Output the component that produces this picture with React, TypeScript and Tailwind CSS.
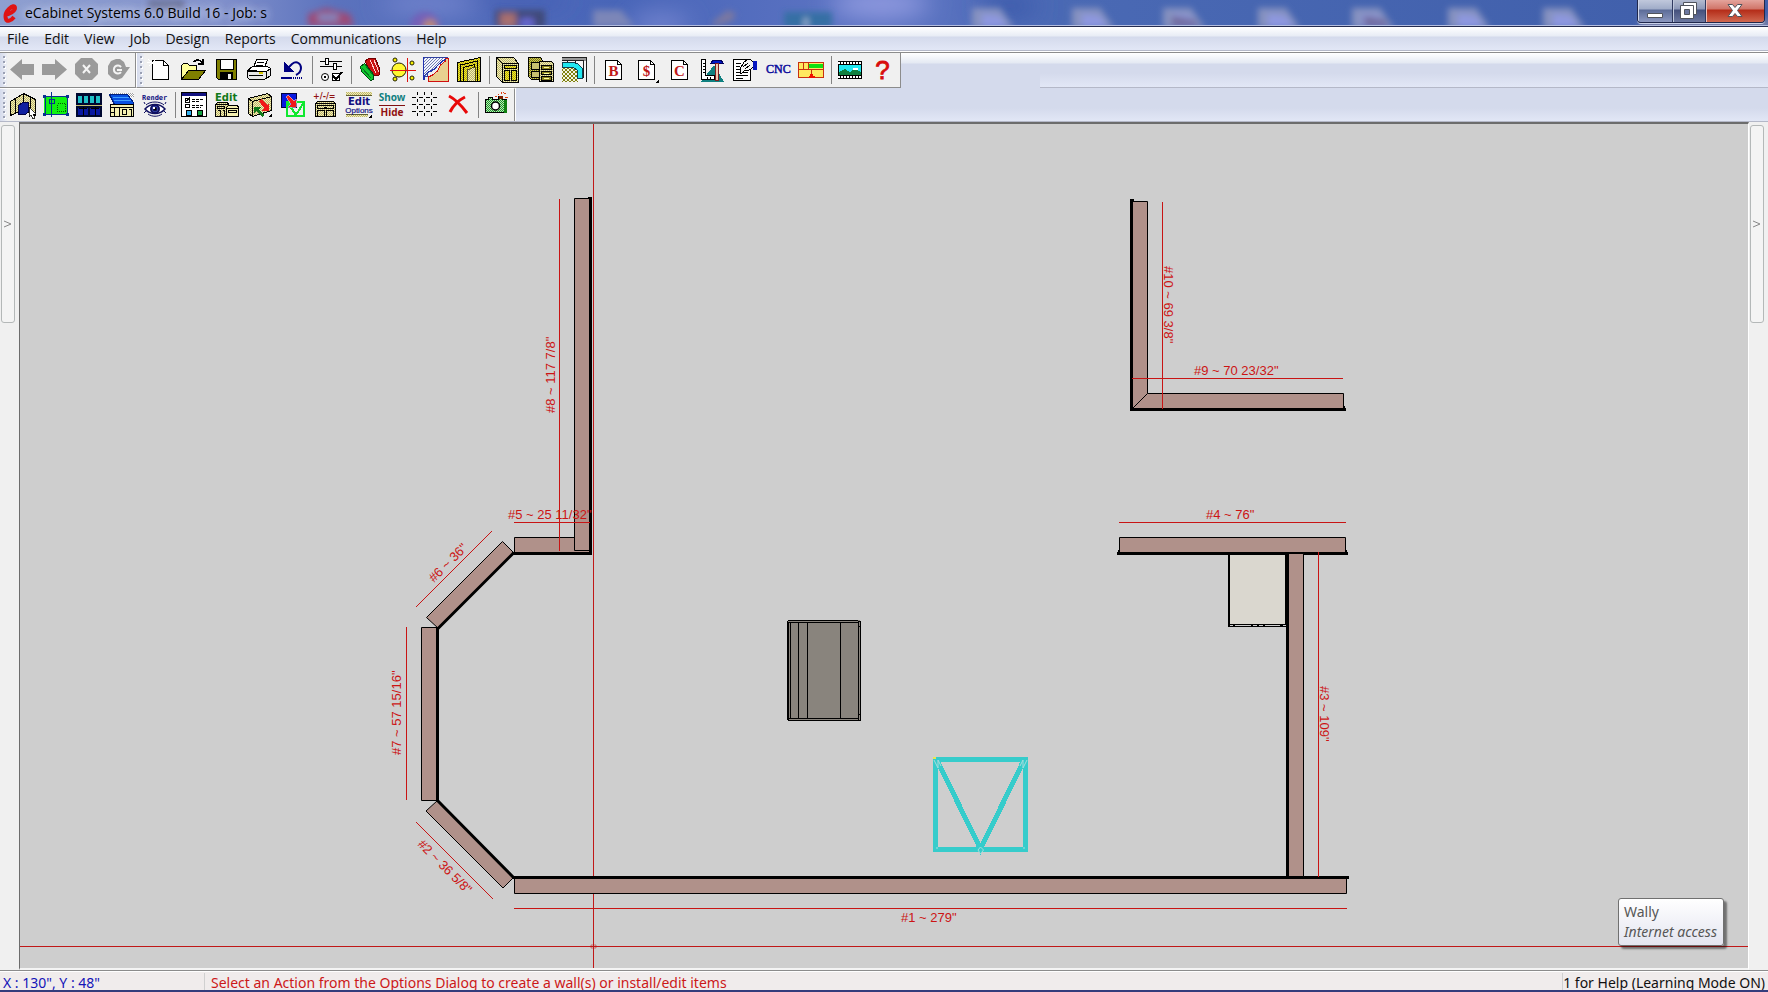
import React, { useState } from "react";

interface ToolProps {
  label: string;
  narrow?: boolean;
  children: React.ReactNode;
}

/* One toolbar button with a 27x26 pixel drawing inside */
function Tool({ label, narrow, children }: ToolProps) {
  return (
    <button
      type="button"
      aria-label={label}
      title={label}
      className={`${narrow ? "w-8" : "w-[33px]"} h-full flex-shrink-0 flex items-center pl-[3px] hover:bg-white/60`}
    >
      <svg width="27" height="26" viewBox="0 0 27 26" shapeRendering="crispEdges" className="overflow-visible">
        {children}
      </svg>
    </button>
  );
}

function Separator() {
  return (
    <span className="w-[6px] h-full flex-shrink-0 flex justify-center py-[3px]">
      <span className="w-px bg-[#848484]" />
    </span>
  );
}

function Grip() {
  return (
    <span className="w-[7px] h-full flex-shrink-0 flex flex-col items-center justify-between py-[3px] bg-gradient-to-r from-[#d4daec] to-[#eceef4]">
      {[0, 1, 2, 3, 4, 5].map((i) => (
        <span key={i} className="w-[2px] h-[2px] bg-[#9aa0b4] shadow-[1px_1px_0_#fff]" />
      ))}
    </span>
  );
}

/* Shared dither patterns for the icons */
function IconPatterns() {
  return (
    <svg width="0" height="0" className="absolute" aria-hidden="true">
      <defs>
        <pattern id="cream" width="2" height="2" patternUnits="userSpaceOnUse">
          <rect width="2" height="2" fill="#f4f0b0" />
          <rect width="1" height="1" fill="#b8b070" />
          <rect x="1" y="1" width="1" height="1" fill="#b8b070" />
        </pattern>
        <pattern id="gold" width="2" height="2" patternUnits="userSpaceOnUse">
          <rect width="2" height="2" fill="#f4ec20" />
          <rect width="1" height="1" fill="#b0a418" />
          <rect x="1" y="1" width="1" height="1" fill="#b0a418" />
        </pattern>
        <pattern id="olive" width="2" height="2" patternUnits="userSpaceOnUse">
          <rect width="2" height="2" fill="#808000" />
          <rect width="1" height="1" fill="#c8c070" />
          <rect x="1" y="1" width="1" height="1" fill="#c8c070" />
        </pattern>
        <pattern id="oliveCheck" width="4" height="4" patternUnits="userSpaceOnUse">
          <rect width="4" height="4" fill="#f4f4e4" />
          <rect width="2" height="2" fill="#808010" />
          <rect x="2" y="2" width="2" height="2" fill="#808010" />
        </pattern>
        <pattern id="grayDither" width="2" height="2" patternUnits="userSpaceOnUse">
          <rect width="2" height="2" fill="#fff" />
          <rect width="1" height="1" fill="#a0a0a0" />
          <rect x="1" y="1" width="1" height="1" fill="#a0a0a0" />
        </pattern>
        <pattern id="greenDither" width="2" height="2" patternUnits="userSpaceOnUse">
          <rect width="2" height="2" fill="#c0e8b0" />
          <rect width="1" height="1" fill="#189830" />
          <rect x="1" y="1" width="1" height="1" fill="#189830" />
        </pattern>
        <pattern id="hatchBlue" width="3" height="3" patternUnits="userSpaceOnUse">
          <rect width="3" height="3" fill="#f4f4ff" />
          <path d="M0 3 3 0" stroke="#7080b0" strokeWidth="1" />
        </pattern>
      </defs>
    </svg>
  );
}

function ReportPage({ mark }: { mark: string }) {
  return (
    <>
      <path d="M5.500 3.500h12l4 4v15h-16z" fill="#fff" stroke="#000" />
      <path d="M17.500 3.500v4h4" fill="none" stroke="#000" />
      <text x="13.500" y="19" textAnchor="middle" fontFamily="Liberation Serif, serif" fontSize="15" fontWeight="700" fill="#c01818">
        {mark}
      </text>
    </>
  );
}

function StandardToolbar() {
  return (
    <div className="flex h-[35px] flex-shrink-0">
      <div className="flex bg-[#f0f0f0] border-b border-[#8c8c8c] border-r">
        <Grip />
        <Tool label="Back" narrow>
          <path d="M0 12.500 12 2v5h12v11H12v5z" fill="#9a9a9a" shapeRendering="auto" />
        </Tool>
        <Tool label="Forward" narrow>
          <path d="M25 12.500 13 2v5H0v11h13v5z" fill="#9a9a9a" shapeRendering="auto" />
        </Tool>
        <Tool label="Stop" narrow>
          <path d="M7 1h11l6 6v10l-6 6H7l-6-6V7z" fill="#9a9a9a" shapeRendering="auto" />
          <path d="M9 8l7 8M16 8l-7 8" stroke="#f4f4f4" strokeWidth="2" shapeRendering="auto" />
        </Tool>
        <Tool label="Refresh" narrow>
          <path d="M10 2h4l4 3 2 5h4l-5 7-3 4-5 2-5-2-4-4V9l3-5z" fill="#9a9a9a" shapeRendering="auto" />
          <path d="M15 10a4 4 0 1 0 0 5" fill="none" stroke="#f4f4f4" strokeWidth="2" shapeRendering="auto" />
          <path d="M11 12h5v2h-5z" fill="#f4f4f4" />
        </Tool>
      </div>
      <div className="flex bg-[#f0f0f0] border-b border-r border-[#8c8c8c] border-l border-l-white">
        <Grip />
        <Tool label="New">
          <path d="M5.500 3.500h11l5 5v14h-16z" fill="#fff" stroke="#000" />
          <path d="M16.500 3.500v5h5" fill="none" stroke="#000" />
          <path d="M1 2l8 7M9 2L2 9M0 5h10" stroke="#fff" />
        </Tool>
        <Tool label="Open">
          <path d="M1.500 21.500v-13l2-2h4l2 2h7v4" fill="#ffff9c" stroke="#000" />
          <path d="M1.500 22.500l7-9h17l-7 9z" fill="#808000" stroke="#000" />
          <path d="M14 5c2-3 6-3 9 1M23 2v5h-5" fill="none" stroke="#000" strokeWidth="1.500" />
        </Tool>
        <Tool label="Save">
          <path d="M3.500 2.500h20v20h-18l-2-2z" fill="#808000" stroke="#000" />
          <path d="M7 2h13v10H7z" fill="#fff" stroke="#000" />
          <path d="M7 15h13v8H7z" fill="#000" />
          <path d="M15 17h3v5h-3z" fill="#f0f0f0" />
        </Tool>
        <Tool label="Print">
          <path d="M7.500 10.500l3-8h11l-3 8z" fill="#fff" stroke="#000" />
          <path d="M11 5h7M10 8h7" stroke="#000" />
          <path d="M1.500 13.500l5-4h15l3 2-4 3z" fill="#fff" stroke="#000" />
          <path d="M1.500 14.500h19v7l-3 1h-14l-2-2zM20.500 14.500l4-3v7l-4 3z" fill="#e8e8e8" stroke="#000" />
          <path d="M3 18h14" stroke="#000" />
          <path d="M13 16h4" stroke="#d8c800" strokeWidth="2" />
        </Tool>
        <Tool label="Undo">
          <path d="M5 5v10h10z" fill="#000080" />
          <path d="M8 12l5-5c5-4 9 0 9 4s-3 6-5 7" fill="none" stroke="#000080" strokeWidth="2" shapeRendering="auto" />
          <path d="M2 21h11" stroke="#000080" strokeWidth="2" />
          <path d="M14 21h10" stroke="#000080" strokeDasharray="1 1" strokeWidth="2" />
        </Tool>
        <Separator />
        <Tool label="Preferences">
          <path d="M2 4.500h22M2 9.500h22" stroke="#000" />
          <path d="M7.500 1.500h3v6h-3zM15.500 6.500h3v6h-3z" fill="#fff" stroke="#000" />
          <circle cx="7" cy="20" r="3.500" fill="#fff" stroke="#000" shapeRendering="auto" />
          <circle cx="7" cy="20" r="1.500" fill="#000" />
          <path d="M14.500 16.500h7v7h-7z" fill="#fff" stroke="#000" />
          <path d="M15 19l3 3 6-7" fill="none" stroke="#000" strokeWidth="2" />
        </Tool>
        <Separator />
        <Tool label="Materials">
          <path d="M8 4l5-3 3 1 2-1 4 9v8l-6 1z" fill="#c81010" stroke="#700000" />
          <path d="M13 3l6 13M17 3l5 12" stroke="#ffd0d0" />
          <path d="M3.500 9.500l4-3 9 11v5l-3 1-9-9z" fill="#10c830" stroke="#004810" />
          <path d="M5 11l9 10M8 8l8 10" stroke="#087820" />
        </Tool>
        <Tool label="Hardware layout">
          <g shapeRendering="auto" stroke="#202000" fill="#f8f000">
            <circle cx="9" cy="13" r="7" fill="#fff830" />
            <circle cx="5" cy="3" r="2" />
            <circle cx="5" cy="22" r="2" />
            <circle cx="22" cy="6" r="2" />
            <circle cx="22" cy="21" r="2" />
          </g>
          <path d="M0 13.500h26M17.500 1v24" stroke="#e01010" />
        </Tool>
        <Tool label="Profiles">
          <path d="M.5.500h24l-1 3h-4l-5 5-4 5-6 2v4h-4z" fill="url(#hatchBlue)" stroke="#3040a0" />
          <path d="M25.500 1v23h-20v-4l4-2 5-4 3-6 5-4v-3z" fill="#e8d090" stroke="#d01010" />
          <path d="M.5 0v23M1 23v-4l4-4 6-3 5-5 7-5" fill="none" stroke="#2030b0" />
        </Tool>
        <Tool label="Door frame">
          <path d="M1.500 24.500v-19l23-5v24z" fill="url(#gold)" stroke="#000" />
          <path d="M4.500 24V8l17-4v20M7.500 24V10.500l11-3V24" fill="none" stroke="#000" />
          <path d="M11 24V13l8-3v14z" fill="url(#cream)" stroke="#000" strokeWidth=".6" />
        </Tool>
        <Separator />
        <Tool label="Base cabinet">
          <path d="M1.500.500h17l5 6v19h-16l-6-6z" fill="url(#cream)" stroke="#000" />
          <path d="M1.500.500l6 6h16M7.500 6v19" fill="none" stroke="#000" />
          <path d="M9.500 8.500h12v3h-12zM9.500 13.500h5v10h-5zM16.500 13.500h5v10h-5z" fill="url(#gold)" stroke="#000" />
        </Tool>
        <Tool label="Cabinet group">
          <path d="M.5.500h12l2 3v19h-11l-3-3z" fill="url(#olive)" stroke="#000" />
          <path d="M3 5h9v7H3zM3 14h9v6H3z" fill="#c8c070" stroke="#000" />
          <path d="M11.500 4.500h12l2 2v18h-14z" fill="url(#cream)" stroke="#000" />
          <path d="M13.500 8.500h10v4h-10zM13.500 14.500h10v3h-10zM13.500 19.500h10v4h-10z" fill="#8c8420" stroke="#000" />
          <path d="M16 10.500h5M16 16h5M16 21.500h5" stroke="#ffffa0" />
        </Tool>
        <Tool label="Countertop">
          <path d="M1 1h24v24H1z" fill="#f4f4f4" />
          <path d="M1 10h12l4 4v11H1z" fill="url(#oliveCheck)" />
          <path d="M1 1h24v3H1z" fill="#989898" />
          <path d="M1 .5h24v24M6.500 4v4M14.500 4v4M1 3.500h21v17" fill="none" stroke="#202020" />
          <path d="M1.500 5.500h10l5 1 5 5v10h-5v-8l-4-3h-11z" fill="#20e8f0" stroke="#104050" />
        </Tool>
        <Separator />
        <Tool label="Buy list">
          <ReportPage mark="B" />
        </Tool>
        <Tool label="Cost report">
          <ReportPage mark="$" />
          <path d="M26 22v4h-4z" fill="#000" />
        </Tool>
        <Tool label="Cut list">
          <ReportPage mark="C" />
        </Tool>
        <Tool label="Shop drawings">
          <path d="M2 25h23L15 8z" fill="#108080" />
          <path d="M2.500 2.500h4v16h9v4h-13z" fill="#fff" stroke="#000" />
          <path d="M4 6h2M4 9h2M4 12h2M4 15h2M8 20v2M11 20v2" stroke="#000" />
          <path d="M12 6c1-4 11-4 12 0z" fill="#0018c8" stroke="#000060" />
          <path d="M16.500 6.500h3v17h-3z" fill="#f0c8b0" stroke="#802020" />
        </Tool>
        <Tool label="Contract">
          <path d="M1.500 2.500h17v21h-17z" fill="#fff" stroke="#000" />
          <path d="M4 6h5M4 9h4M4 12h4M4 15h12M4 18h12M4 21h7" stroke="#000" />
          <path d="M8 12l4-7 5-3 5 3v5l-5 3-5 1-3 3z" fill="#f4f4f4" stroke="#000" />
          <path d="M11 10l5-4M13 12l5-4" stroke="#000" />
          <path d="M21 4h4v9h-4z" fill="#0818c0" />
        </Tool>
        <Tool label="CNC output">
          <text x="1" y="16" fontFamily="Liberation Serif, serif" fontSize="12" fill="#0c0c9c" stroke="#0c0c9c" strokeWidth=".5">
            CNC
          </text>
        </Tool>
        <Tool label="Nesting">
          <path d="M.5 5.500h25v15H.5z" fill="#ffe860" stroke="#c83010" />
          <path d="M11 7h14v4H11z" fill="#10e010" />
          <path d="M.5 12.500h25M5.500 5v7M10.500 5v7M13.500 12v8" fill="none" stroke="#c83010" />
          <path d="M12 17h3v2h2v2h-6v-2h1z" fill="#f01000" />
        </Tool>
        <Separator />
        <Tool label="Tutorial video">
          <path d="M1 4h24v18H1z" fill="#000" />
          <path d="M1 6h24M1 20h24" stroke="#fff" strokeWidth="2" strokeDasharray="2 1" />
          <path d="M2 8h22v10H2z" fill="#20e8f0" />
          <path d="M2 18v-3l6-3 5 3 5-3 6 3v3z" fill="#108040" />
          <path d="M16 11h5v2h-5z" fill="#fff" />
        </Tool>
        <Tool label="Help">
          <text x="12.500" y="22" textAnchor="middle" fontFamily="Liberation Sans, sans-serif" fontSize="26" fill="#d80c0c" stroke="#d80c0c" strokeWidth=".8">
            ?
          </text>
        </Tool>
      </div>
      <div className="w-[139px] bg-[linear-gradient(#fff_0,#e4e9f3_10px,#d4daec_11px)]" />
      <div className="flex-1 border-b border-[#b4b8c8] bg-[linear-gradient(#fff_0,#e4e9f3_10px,#d4daec_11px,#d4daec_20px,#e2e7f6_34px)]" />
    </div>
  );
}

function DesignToolbar() {
  return (
    <div className="flex h-[33px] flex-shrink-0 bg-[linear-gradient(#d4daec_0,#d4daec_20px,#e2e7f6_33px)]">
      <div className="flex bg-[#f0f0f0] border-r border-[#8c8c8c] border-t border-t-white">
        <Grip />
        <Tool label="Select walls">
          <path d="M.5 9.500l13-8v16l-13 6z" fill="url(#cream)" stroke="#000" />
          <path d="M13.500 1.500l12 6v16l-12-6z" fill="url(#cream)" stroke="#000" />
          <path d="M5.500 7v15M20.500 5v15" stroke="#000" />
          <path d="M8.500 13.500l4-3h6v9l-3 3h-7z" fill="#1020a0" stroke="#000040" />
          <path d="M19 15v10l2-2 2 4 2-1-2-4h3z" fill="#fff" stroke="#000" strokeWidth=".8" />
        </Tool>
        <Tool label="Floor plan">
          <path d="M1 4h24v18H1z" fill="#10f010" />
          <path d="M1 4.500h24M2.500 3v21M24.500 3v21M1 22.500h24M8.500 0v25" fill="none" stroke="#083090" />
          <path d="M0 3h3v3H0zM23 3h3v3h-3zM0 21h3v3H0zM23 21h3v3h-3z" fill="#083090" />
          <path d="M6 7h5v4H6z" fill="none" stroke="#083090" />
          <path d="M14.500 11.500h8v8h-8z" fill="none" stroke="#006000" strokeDasharray="1 1" />
        </Tool>
        <Tool label="Elevation">
          <path d="M0 1h26v24H0z" fill="#000830" />
          <path d="M2 4h4v7H2zM8 4h4v7H8zM14 4h4v7h-4zM20 4h4v7h-4z" fill="#20c0c8" />
          <path d="M0 13h26v1H0z" fill="#c8c070" />
          <path d="M2 16h10v7H2zM14 16h10v7H14z" fill="#0818a0" />
          <path d="M7 15v9M19 15v9M3 16h8M15 16h8" stroke="#000" />
        </Tool>
        <Tool label="Exterior">
          <path d="M0 1h25v4H0z" fill="url(#grayDither)" />
          <path d="M.5 2.500h18l6 8v2H5.500z" fill="#0850e0" stroke="#002080" />
          <path d="M4 5h16M5 8h17" stroke="#40a0ff" />
          <path d="M1.500 12.500h23v12h-23z" fill="#f4f0b0" stroke="#000" />
          <path d="M5.500 15.500h5v9M1 15.500h24M13.500 17.500h4v5h-4zM19.500 17.500h3v7M5.500 15v9M1 20.500h4" fill="none" stroke="#000" />
        </Tool>
        <Tool label="Render view">
          <text x="0" y="8" fontFamily="DejaVu Sans Mono, monospace" fontSize="7" fontWeight="700" fill="#101080">
            Render
          </text>
          <g shapeRendering="auto" fill="none" stroke="#101060">
            <path d="M3 17c5-6 15-6 20 0-5 6-15 6-20 0z" fill="#fff" strokeWidth="1.500" />
            <path d="M4 13c4-4 14-4 18 0M6 22c4 3 10 3 14 0M4 19l-2 2M22 19l2 2M3 12l-1-2M23 12l1-2" />
            <circle cx="13" cy="17" r="4" fill="#4058c0" strokeWidth="2" />
            <circle cx="13" cy="17" r="2" fill="#000" />
          </g>
          <path d="M11 15h2v2h-2z" fill="#fff" />
        </Tool>
        <Separator />
        <Tool label="Display options">
          <path d="M.5.500h25v24H.5z" fill="#fff" stroke="#000" strokeWidth="1.500" />
          <path d="M1 1h24v3H1z" fill="#101080" />
          <path d="M4.500 6.500h4v4h-4zM4.500 12.500h4v3h-4z" fill="none" stroke="#000" />
          <path d="M5 8l1 1 3-4" fill="none" stroke="#000" />
          <path d="M11 7h12M11 9h8M11 13h12M11 15h9" stroke="#000" strokeDasharray="3 1" />
          <path d="M5 18h5v5H5z" fill="#30b0f0" stroke="#000" />
          <path d="M16 18h5v5h-5z" fill="#10a040" stroke="#000" />
        </Tool>
        <Tool label="Edit cabinet">
          <text x="1" y="9" fontFamily="DejaVu Sans, sans-serif" fontSize="10" fontWeight="700" fill="#107818">
            Edit
          </text>
          <path d="M1.500 12.500l2-2h10l1 2v12h-13z" fill="url(#cream)" stroke="#000" />
          <path d="M12.500 15.500l2-2h9l1 2v9h-12z" fill="#f4f0b0" stroke="#000" />
          <path d="M1 12.500h13M3.500 14.500h7v2h-7zM3.500 18.500h3v6M8.500 18.500h2v6M12 16.500h12M14.500 18.500h8v2h-8z" fill="none" stroke="#000" />
        </Tool>
        <Tool label="Move wall item">
          <path d="M1.500 6.500l19-5 4 3v14l-19 6-4-3z" fill="url(#cream)" stroke="#000" />
          <path d="M1.500 6.500l4 3 19-5M5.500 9v15" fill="none" stroke="#000" />
          <path d="M12 9l2-2 6 6 2-2v8h-8l3-3z" fill="#f01818" />
          <path d="M7 15h7l-2 2 5 6-2 2-6-6-2 2z" fill="#107818" />
          <path d="M25 21v4h-4z" fill="#000" />
        </Tool>
        <Tool label="Move to floor">
          <path d="M1 1h15v14H1z" fill="#0818e0" stroke="#000040" />
          <path d="M7 10h17v14H7zM8 11l8 12 8-13" fill="none" stroke="#10e830" strokeWidth="2" />
          <path d="M6 5l2-2 6 6 2-2v8H8l3-3z" fill="#f01818" stroke="#fff" strokeWidth=".5" />
        </Tool>
        <Tool label="Resize cabinet">
          <text x="0" y="7" fontFamily="DejaVu Sans, sans-serif" fontSize="8" fontWeight="700" fill="#901010">
            +/-/=
          </text>
          <path d="M2.500 11.500l2-2h16l2 2v13h-20z" fill="url(#cream)" stroke="#000" />
          <path d="M2 11.500h21M4.500 13.500h16v3h-16zM4.500 18.500h7v6M13.500 18.500h7v6M4.500 18v6M13.500 18v6M11 15h3" fill="none" stroke="#000" />
        </Tool>
        <Tool label="Edit options">
          <path d="M0 0h26v3H0zM0 22h22v3H0z" fill="url(#cream)" />
          <path d="M0 3.500h26M0 22.500h22" stroke="#606030" />
          <text x="13" y="13" textAnchor="middle" fontFamily="DejaVu Sans, sans-serif" fontSize="10" fontWeight="700" fill="#101080">
            Edit
          </text>
          <text x="13" y="21" textAnchor="middle" fontFamily="Liberation Sans, sans-serif" fontSize="8" fill="#101080" stroke="#101080" strokeWidth=".2">
            Options
          </text>
          <path d="M26 22v4h-4z" fill="#000" />
        </Tool>
        <Tool label="Show or hide">
          <text x="13" y="9" textAnchor="middle" fontFamily="Noto Sans, sans-serif" fontSize="10" fontWeight="700" fill="#108080">
            Show
          </text>
          <path d="M0 13h26" stroke="#801010" strokeWidth="1" />
          <text x="13" y="24" textAnchor="middle" fontFamily="Noto Sans, sans-serif" fontSize="10" fontWeight="700" fill="#901010">
            Hide
          </text>
        </Tool>
        <Tool label="Grid">
          <path d="M0 5.500h26M0 12.500h26M0 19.500h26" stroke="#000" strokeDasharray="4 3" />
          <path d="M5.500 0v26M12.500 0v26M19.500 0v26" stroke="#000" strokeDasharray="3 4" />
        </Tool>
        <Tool label="Delete">
          <path d="M4 4c4 2 12 9 18 17M20 5C14 8 8 14 5 20" fill="none" stroke="#e80808" strokeWidth="3" shapeRendering="auto" />
        </Tool>
        <Separator />
        <Tool label="Snapshot">
          <path d="M1.500 7.500h3v-2h4v2h6v-3h4v3h4v13h-21z" fill="url(#greenDither)" stroke="#000" />
          <path d="M20 8h3v13h-3z" fill="#108010" />
          <path d="M15 4h4v3h-4z" fill="#802000" />
          <circle cx="11.500" cy="14" r="4" fill="#fff" stroke="#000" strokeWidth="1.500" shapeRendering="auto" />
          <path d="M14 2l1 1M17 0v2M20 2l2-1M13 5l-2-1M21 5h3M19 1l1-1" stroke="#e04010" />
        </Tool>
      </div>
      <div className="flex-1 border-l border-white" />
    </div>
  );
}

const dimensionLines = [
  "M514 908.500h833",
  "M416 822l77 77",
  "M1318.500 552v325",
  "M1119 522.500h227",
  "M514 522.500h76",
  "M416 607l76-76",
  "M406.500 627v173",
  "M559.500 199v352",
  "M1132 378.500h211",
  "M1162.500 202v207",
];

const dimensionLabels = [
  { text: '#1 ~ 279"', x: 901, y: 922, angle: 0 },
  { text: '#2 ~ 36 5/8"', x: 417, y: 845, angle: 45 },
  { text: '#3 ~ 109"', x: 1320, y: 686, angle: 90 },
  { text: '#4 ~ 76"', x: 1206, y: 519, angle: 0 },
  { text: '#5 ~ 25 11/32"', x: 508, y: 519, angle: 0 },
  { text: '#6 ~ 36"', x: 434, y: 583, angle: -45 },
  { text: '#7 ~ 57 15/16"', x: 401, y: 755, angle: -90 },
  { text: '#8 ~ 117 7/8"', x: 555, y: 413, angle: -90 },
  { text: '#9 ~ 70 23/32"', x: 1194, y: 375, angle: 0 },
  { text: '#10 ~ 69 3/8"', x: 1164, y: 266, angle: 90 },
];

/* Plan view of the room: walls, dimensions, cabinets and cursor crosshair */
function FloorPlan() {
  return (
    <svg className="block w-full h-full" role="img" aria-label="Floor plan">
      <g transform="translate(-20 -124)">
        <path d="M593.500 124v850M0 946.500h4000" stroke="#c01818" fill="none" />
        <path d="M591 945h5v3h-5z" fill="none" stroke="#c01818" strokeOpacity=".5" />

        <g fill="#b0918a" stroke="#000">
          <path d="M514.500 537.500h75v15h-75z" />
          <path d="M574.500 198.500h16v352h-16z" />
          <path d="M502.500 541.500l11 11-75 76-12-11z" />
          <path d="M421.500 627.500h16v173h-16z" />
          <path d="M437.500 800.500l76 77-10.500 10.500-77-77z" />
          <path d="M514.500 877.500h832v16h-832z" />
          <path d="M1119.500 537.500h226v15h-226z" />
          <path d="M1132.500 201.500h15v192h196v16h-211z" />
          <path d="M1132 409l15.500-15.500" />
        </g>
        <g fill="none" stroke="#000" strokeWidth="3">
          <path d="M590.500 197v357.500M512 553.500h80" />
          <path d="M514 552.500l-76 76M437.500 627v174M437 800l77 78" />
          <path d="M513 877.500h836" />
          <path d="M1117 553.500h231" />
          <path d="M1131.500 199v211.500M1130 409.500h216" />
        </g>
        <path d="M1131 199h3v3h-3zM1343 406h2v3h-2zM1118 550h2v3h-2zM1345 550h2v3h-2zM588 197h3v2h-3z" fill="#000" />
        <path d="M1288.500 553.500h15v323h-15z" fill="#b0918a" stroke="#000" />
        <path d="M1287.500 553v324" stroke="#000" strokeWidth="3" />

        {/* wall cabinet */}
        <path d="M1229 555h57v70h-57z" fill="#dad7cf" />
        <path d="M1229 554v73" stroke="#000" strokeWidth="2" />
        <path d="M1228 624.500h59M1228 626.500h59" stroke="#000" />
        <path d="M1233 625.500h2M1251 625.500h2M1257 625.500h2M1263 625.500h2M1280 625.500h3" stroke="#000" />
        <path d="M1286 554v70" stroke="#000" strokeWidth="2" />

        {/* island cabinet */}
        <path d="M788 620h72v100h-72z" fill="#89847d" />
        <path
          d="M788 620.500h70M787 622.500h72M788 718.500h71M788 720.500h73M787.500 621v99M788.500 622v98M790.500 622v97M798.500 622v96M807.500 622v96M840.500 622v96M858.500 621v99M860.500 621v100M858 621.500h3M858 626.500h3M858 714.500h3"
          fill="none"
          stroke="#000"
        />

        {/* selected item */}
        <g fill="none" stroke="#36cccb" strokeWidth="5" shapeRendering="crispEdges">
          <path d="M935.500 759.500h90v90h-90z" />
          <path d="M937 760l43.500 89L1024 760" />
        </g>
        <path d="M934 760l4 8v-8l3 6M1027 760l-4 8v-8l-3 6M978 850l2.500-3 3 3-3 4zM936 848h2M1023 848h2" fill="none" stroke="#a8dcdc" />
        <path d="M933 757h3v2h-3z" fill="#e8e850" />

        <path d={dimensionLines.join("")} fill="none" stroke="#c81414" />
        {dimensionLabels.map((label) => (
          <text
            key={label.text}
            x={label.x}
            y={label.y}
            transform={`rotate(${label.angle} ${label.x} ${label.y})`}
            fill="#cc1414"
            fontSize="13"
            fontFamily="Liberation Sans, Arial, sans-serif"
          >
            {label.text}
          </text>
        ))}
      </g>
    </svg>
  );
}

/* Blurred desktop seen through the glass title bar */
function Glass() {
  const pages = [972, 1072, 1163, 1258, 1352, 1448, 1543];
  return (
    <svg className="absolute inset-0 w-full h-full" aria-hidden="true">
      <defs>
        <filter id="soft" x="-20%" y="-50%" width="140%" height="200%">
          <feGaussianBlur stdDeviation="3" />
        </filter>
        <filter id="wide" x="-50%" y="-150%" width="200%" height="400%">
          <feGaussianBlur stdDeviation="12" />
        </filter>
        <linearGradient id="sky">
          <stop offset="0" stopColor="#8e9fd0" />
          <stop offset=".12" stopColor="#8392cc" />
          <stop offset=".19" stopColor="#5b72bd" />
          <stop offset=".35" stopColor="#4865b8" />
          <stop offset=".5" stopColor="#5f75c4" />
          <stop offset=".6" stopColor="#4a69b4" />
          <stop offset="1" stopColor="#3f5eaa" />
        </linearGradient>
      </defs>
      <rect width="100%" height="100%" fill="url(#sky)" />
      <g filter="url(#wide)">
        <ellipse cx="880" cy="4" rx="50" ry="12" fill="#98a0e4" />
        <ellipse cx="660" cy="24" rx="30" ry="8" fill="#8490d8" />
        <ellipse cx="430" cy="4" rx="50" ry="8" fill="#7e8cd4" />
        <ellipse cx="520" cy="0" rx="50" ry="6" fill="#4058b0" />
        <ellipse cx="1010" cy="6" rx="30" ry="14" fill="#3c5cac" />
      </g>
      <g filter="url(#soft)">
        <path d="M148 0h36v10h-36z" fill="#686f98" />
        <path d="M308 14l18-6 24 6 4 12h-46z" fill="#9c4c78" />
        <path d="M318 14h20v7h-20z" fill="#8088c0" />
        <circle cx="425" cy="27" r="15" fill="#7460b8" />
        <circle cx="430" cy="26" r="7" fill="#b88878" />
        <path d="M495 10h50v18h-50z" fill="#404878" />
        <path d="M500 13h16v14h-16z" fill="#a87070" />
        <path d="M520 18h14v9h-14z" fill="#6868d0" />
        <path d="M593 10h28l14 17h-42z" fill="#7c86b8" />
        <path d="M728 10l8 4-4 7-20 6 2-6z" fill="#7c78a0" />
        <path d="M784 12h48v16h-48z" fill="#366fa4" />
        <path d="M804 18h4v9h-4z" fill="#a0b8d8" />
        {pages.map((x) => (
          <g key={x}>
            <path d={`M${x} 8h28l14 20H${x}z`} fill="#8692c0" />
            <path d={`M${x + 10} 14l18 2 8 12H${x + 10}z`} fill="#8e98e0" />
          </g>
        ))}
        <path d="M1172 16l22 4 6 6h-28z" fill="#706898" />
        <path d="M1364 16l22 4 2 6h-24z" fill="#706898" />
        <path d="M1640 18h130v12h-130z" fill="#7880a8" />
      </g>
    </svg>
  );
}

function TitleBar() {
  return (
    <header className="relative h-[27px] flex-shrink-0 flex justify-between border-b border-[#252c50]">
      <Glass />
      <span className="absolute inset-x-0 bottom-0 h-px bg-[#b4bee0]" />
      <div className="relative flex items-center h-[26px]">
        <svg width="17" height="19" viewBox="0 0 17 19" className="ml-px mr-[7px]" aria-hidden="true">
          <path
            d="M3 11C8 11 14 7 14 4c0-3-3-2-6 1-3 3-4 7-3 10 1 3 5 2 8-2"
            fill="none"
            stroke="#e01414"
            strokeWidth="4"
          />
        </svg>
        <h1 className="text-[14px] leading-5 text-black [text-shadow:0_0_8px_#d8def4,0_0_10px_#d8def4]">
          eCabinet Systems 6.0 Build 16 - Job: s
        </h1>
      </div>
      <div className="relative flex h-[23px] mr-[3px] rounded-b border border-t-0 border-[#20284c] overflow-hidden shadow-[0_1px_0_#c8d0e8]">
        <button
          type="button"
          aria-label="Minimize"
          className="w-[35px] flex items-center justify-center border-r border-[#303a60] bg-[linear-gradient(#c0c8dc_0,#a0acc8_9px,#5c6c98_10px,#8c98c0_22px)] shadow-[inset_1px_0_0_#d0d8ec]"
        >
          <svg width="18" height="20" viewBox="0 0 18 20">
            <path d="M1.500 12.500h15v4h-15z" fill="#fff" stroke="#50545c" />
          </svg>
        </button>
        <button
          type="button"
          aria-label="Restore"
          className="w-[33px] flex items-center justify-center border-r border-[#303a60] bg-[linear-gradient(#b4bcd0_0,#8c98b8_9px,#44507c_10px,#6c78a0_22px)] shadow-[inset_1px_0_0_#c0c8dc]"
        >
          <svg width="20" height="20" viewBox="0 0 20 20">
            <path d="M4.500 1.500h13v12h-13z" fill="#fff" stroke="#50545c" />
            <path d="M1.500 4.500h13v13h-13z" fill="#fff" stroke="#50545c" />
            <path d="M5.500 8.500h5v5h-5z" fill="#6c78a0" stroke="#50545c" />
          </svg>
        </button>
        <button
          type="button"
          aria-label="Close"
          className="w-[58px] flex items-center justify-center bg-[linear-gradient(#e4a49c_0,#d07468_9px,#b42c18_10px,#d06850_22px)] shadow-[inset_1px_0_0_#f0c0b8]"
        >
          <svg width="18" height="18" viewBox="0 0 18 18">
            <path
              d="M2 2.500h4.500L9 5.500l2.500-3H16L11.500 8.500 16 14.500h-4.500L9 11.500l-2.500 3H2L6.500 8.500z"
              fill="#fff"
              stroke="#50545c"
            />
          </svg>
        </button>
      </div>
    </header>
  );
}

function SideTab({ label, open, onToggle }: { label: string; open: boolean; onToggle: () => void }) {
  return (
    <aside className="flex-shrink-0 bg-[#f0f0f0] pt-[3px] pl-px pr-[4px]">
      <button
        type="button"
        aria-label={label}
        aria-expanded={open}
        onClick={onToggle}
        className="w-[14px] h-[198px] flex items-center justify-center rounded-[3px] border border-[#b4b8b8] bg-[#f4f4f4]"
      >
        <svg width="8" height="8" viewBox="0 0 8 8">
          <path d="M0 1l7 3-7 3" fill="none" stroke="#888" />
        </svg>
      </button>
    </aside>
  );
}

export default function App() {
  const [leftOpen, setLeftOpen] = useState(false);
  const [rightOpen, setRightOpen] = useState(false);

  const menus = ["File", "Edit", "View", "Job", "Design", "Reports", "Communications", "Help"];

  return (
    <div className="h-screen flex flex-col overflow-hidden bg-[#f0f0f0] font-['Open_Sans','Segoe_UI',sans-serif] text-[14px] leading-5 text-[#101010]">
      <IconPatterns />
      <TitleBar />

      {/* Menu bar */}
      <nav className="h-[24px] flex-shrink-0 flex items-center gap-px border-b border-[#b4b8c8] bg-[linear-gradient(#fff_0,#e8ecf5_9px,#d4daec_10px,#e2e7f6_23px)]">
        {menus.map((name) => (
          <button key={name} type="button" className="px-[7px] hover:bg-white/70">
            {name}
          </button>
        ))}
      </nav>
      <div className="h-[2px] flex-shrink-0 bg-white border-b border-[#8c8c8c]" />

      <StandardToolbar />
      <DesignToolbar />

      {/* Drawing area */}
      <div className="flex flex-1 min-h-0 border-t border-[#b4b8c8]">
        <SideTab label="Left panel" open={leftOpen} onToggle={() => setLeftOpen(!leftOpen)} />
        <main className="relative flex-1 min-w-0 bg-[#cecece] border-l border-t-2 border-[#6c6c6c] border-r border-r-white border-b-2 border-b-[#f4f4f4]">
          <FloorPlan />
          <div
            role="status"
            className="absolute right-[24px] bottom-[22px] w-[106px] h-[48px] px-[5px] py-[3px] rounded-[3px] border border-[#707070] bg-gradient-to-b from-white to-[#e4e5f0] text-[#575757] font-['Noto_Sans','Segoe_UI',sans-serif] shadow-[3px_3px_2px_rgba(0,0,0,0.45)] whitespace-nowrap"
          >
            <p>Wally</p>
            <p className="italic">Internet access</p>
          </div>
        </main>
        <SideTab label="Right panel" open={rightOpen} onToggle={() => setRightOpen(!rightOpen)} />
      </div>

      {/* Status bar */}
      <footer className="h-[22px] flex-shrink-0 flex items-end border-t border-[#8c8c8c] border-b-2 border-b-[#343c7c] bg-[#f0ecec] font-['Noto_Sans','Segoe_UI',sans-serif] shadow-[inset_0_1px_0_#fff] overflow-hidden whitespace-nowrap">
        <p className="w-[205px] pl-[3px] h-[17px] text-[#1414b8] border-r border-[#d0d0d0]">X : 130", Y : 48"</p>
        <p className="flex-1 pl-[6px] h-[17px] text-[#cc1818]">
          Select an Action from the Options Dialog to create a wall(s) or install/edit items
        </p>
        <p className="pr-[3px] h-[17px] border-l border-[#d0d0d0]">1 for Help (Learning Mode ON)</p>
      </footer>
    </div>
  );
}
